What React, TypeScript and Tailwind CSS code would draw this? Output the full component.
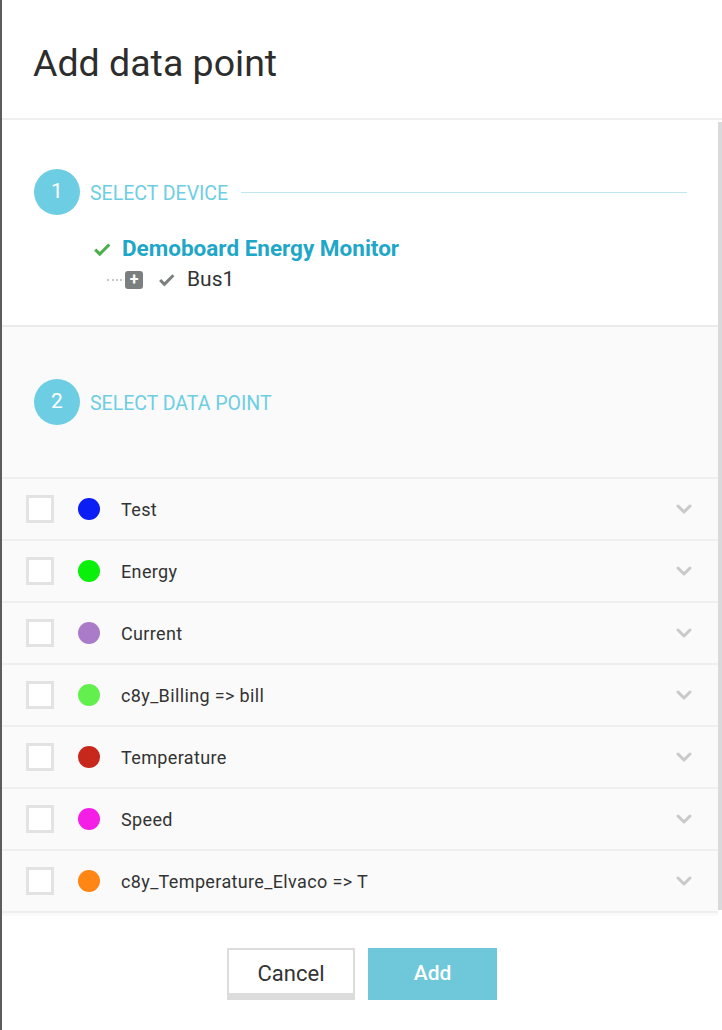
import { ChevronDown } from "lucide-react";

const points = [
    { name: "Test", color: "#0a1ef5" },
    { name: "Energy", color: "#0af00a" },
    { name: "Current", color: "#a97bc8" },
    { name: "c8y_Billing => bill", color: "#63f04e" },
    { name: "Temperature", color: "#c8281c" },
    { name: "Speed", color: "#f51ee6" },
    { name: "c8y_Temperature_Elvaco => T", color: "#ff8514" },
];

const Step = ({ n, label }: { n: number; label: string }) => (
    <div className="flex items-center">
        <div className="flex size-[46px] shrink-0 items-center justify-center rounded-full bg-[#6dcee3] text-[21px] text-white">
            {n}
        </div>
        <div className="ml-[10px] mt-[3px] text-[19.5px] text-[#6dcee3]">{label}</div>
    </div>
);

const Check = ({ className }: { className: string }) => (
    <svg viewBox="0 0 16 16" className={className}>
        <path d="M2 8.5l4 4L14.5 4" fill="none" stroke="currentColor" strokeWidth="2.8" />
    </svg>
);

export default function App() {
    return (
        <div
            className="flex h-[1030px] w-[722px] flex-col border-l-2 border-[#5c5c5c] bg-white text-[#333]"
            style={{ fontFamily: "Roboto, 'Liberation Sans', sans-serif" }}
        >
            <div className="flex h-[120px] shrink-0 items-center border-b-2 border-[#efefef] pl-[31px]">
                <h1 className="mt-[8px] text-[37.5px] text-[#2d2d2d]">Add data point</h1>
            </div>

            <div className="relative flex min-h-0 grow flex-col">
                <div className="flex h-[207px] shrink-0 flex-col border-b-2 border-[#ebebeb] pl-[32px] pr-[35px] pt-[49px]">
                    <div className="flex items-center">
                        <Step n={1} label="SELECT DEVICE" />
                        <div className="ml-[13px] h-px grow bg-[#bfe6ee]" />
                    </div>
                    <div className="ml-[59px] mt-[17px] flex items-center">
                        <Check className="size-[18px] text-[#4cae4c]" />
                        <span className="ml-[11px] text-[22.5px] font-bold text-[#1fa7c7]">
                            Demoboard Energy Monitor
                        </span>
                    </div>
                    <div className="ml-[73px] -mt-[2px] flex items-center">
                        <div className="w-[15px] border-t-2 border-dotted border-[#c8c8c8]" />
                        <div className="ml-[3px] flex size-[18px] items-center justify-center rounded-[3px] bg-[#7b7f7f] text-[16px] font-bold leading-none text-white">
                            +
                        </div>
                        <Check className="ml-[15px] size-[17px] text-[#7b7f7f]" />
                        <span className="ml-[12px] text-[21px]">Bus1</span>
                    </div>
                </div>

                <div className="mr-[4px] flex min-h-0 grow flex-col bg-[#fafafa]">
                    <div className="flex h-[150px] shrink-0 items-center pl-[32px]">
                        <Step n={2} label="SELECT DATA POINT" />
                    </div>
                    {points.map((p) => (
                        <div
                            key={p.name}
                            className="flex h-[62px] shrink-0 items-center border-t-2 border-[#efefef] pl-[24px] pr-[22px]"
                        >
                            <div className="size-[28px] border-[3px] border-[#e3e3e3] bg-white" />
                            <div className="ml-[24px] size-[22px] rounded-full" style={{ background: p.color }} />
                            <span className="ml-[21px] text-[18px] tracking-[0.02em]">{p.name}</span>
                            <ChevronDown className="ml-auto size-[24px] text-[#c9c9c9]" strokeWidth={3} />
                        </div>
                    ))}
                    <div className="border-t-2 border-[#efefef]" />
                </div>
                <div className="absolute right-0 top-[2px] h-[788px] w-[4px] bg-[#d7dbdb]" />
            </div>

            <div className="flex h-[114px] shrink-0 items-start justify-center gap-[13px] bg-white pt-[32px]">
                <button className="h-[52px] w-[128px] border-2 border-b-[7px] border-[#dcdcdc] bg-white pt-[3px] text-[22px] text-[#333]">
                    Cancel
                </button>
                <button className="h-[52px] w-[129px] bg-[#6ec8da] text-[21px] font-medium text-white">
                    Add
                </button>
            </div>
        </div>
    );
}
